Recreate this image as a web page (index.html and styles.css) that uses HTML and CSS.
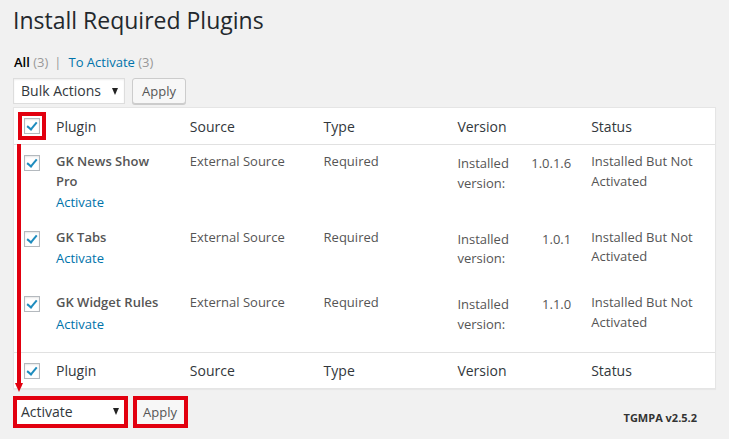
FILE: index.html
```html
<!DOCTYPE html>
<html lang="en">
<head>
    <meta charset="UTF-8">
    <meta name="viewport" content="width=device-width, initial-scale=1.0">
    <title>Install Required Plugins</title>
    <link rel="stylesheet" href="styles.css">
</head>
<body>

<div class="wrap">
    <h1>Install Required Plugins</h1>

    <ul class="subsubsub">
        <li><strong>All</strong> <span class="count">(3)</span></li>
        <li class="sep">|</li>
        <li><a href="#">To Activate</a> <span class="count">(3)</span></li>
    </ul>

    <div class="tablenav top">
        <div class="select">Bulk Actions<span class="arrow"></span></div>
        <button class="button">Apply</button>
    </div>

    <div class="table-box">
        <table class="plugins">
            <colgroup>
                <col class="col-cb">
                <col><col><col><col><col>
            </colgroup>
            <thead>
                <tr>
                    <th class="check-column"><span class="cb marked"></span></th>
                    <th>Plugin</th>
                    <th>Source</th>
                    <th>Type</th>
                    <th>Version</th>
                    <th>Status</th>
                </tr>
            </thead>
            <tbody>
                <tr>
                    <td class="check-column"><span class="cb"></span></td>
                    <td><strong>GK News Show Pro</strong><div class="row-actions"><a href="#">Activate</a></div></td>
                    <td>External Source</td>
                    <td>Required</td>
                    <td><p class="ver"><span class="lbl">Installed version:</span><span>1.0.1.6</span></p></td>
                    <td>Installed But Not Activated</td>
                </tr>
                <tr>
                    <td class="check-column"><span class="cb"></span></td>
                    <td><strong>GK Tabs</strong><div class="row-actions"><a href="#">Activate</a></div></td>
                    <td>External Source</td>
                    <td>Required</td>
                    <td><p class="ver"><span class="lbl">Installed version:</span><span>1.0.1</span></p></td>
                    <td>Installed But Not Activated</td>
                </tr>
                <tr>
                    <td class="check-column"><span class="cb"></span></td>
                    <td><strong>GK Widget Rules</strong><div class="row-actions"><a href="#">Activate</a></div></td>
                    <td>External Source</td>
                    <td>Required</td>
                    <td><p class="ver"><span class="lbl">Installed version:</span><span>1.1.0</span></p></td>
                    <td>Installed But Not Activated</td>
                </tr>
            </tbody>
            <tfoot>
                <tr>
                    <th class="check-column"><span class="cb"></span></th>
                    <th>Plugin</th>
                    <th>Source</th>
                    <th>Type</th>
                    <th>Version</th>
                    <th>Status</th>
                </tr>
            </tfoot>
        </table>
        <!-- annotation arrow -->
        <div class="mark-line"></div>
    </div>

    <div class="tablenav bottom">
        <div class="select marked-box">Activate<span class="arrow"></span></div>
        <button class="button marked-box">Apply</button>
        <p class="tgmpa"><strong>TGMPA v2.5.2</strong></p>
    </div>
</div>

</body>
</html>
```

FILE: styles.css
```css
body {
    margin: 0;
    background: #f1f1f1;
    font-family: "Open Sans", "Liberation Sans", sans-serif;
    font-size: 13px;
    color: #444;
}

.wrap {
    padding: 0 13px;
}

h1 {
    margin: 0;
    padding-top: 6px;
    font-size: 23px;
    font-weight: 400;
    line-height: 29px;
    color: #23282d;
}

a {
    color: #0073aa;
    text-decoration: none;
}

.subsubsub {
    list-style: none;
    margin: 14px 0 0;
    padding: 0 0 0 1px;
    display: flex;
    line-height: 26px;
    color: #666;
}

.subsubsub strong {
    color: #000;
    font-weight: 600;
}

.subsubsub .count {
    color: #999;
}

.subsubsub .sep {
    margin: 0 7px 0 6px;
    color: #999;
}

.tablenav {
    display: flex;
    align-items: flex-start;
    gap: 7px;
}

.tablenav.top {
    margin-top: 3px;
}

.tablenav.bottom {
    margin-top: 7px;
    gap: 5px;
}

.select {
    box-sizing: border-box;
    width: 112px;
    height: 26px;
    padding: 0 6px 0 7px;
    display: flex;
    align-items: center;
    justify-content: space-between;
    background: #fff;
    border: 1px solid #ddd;
    box-shadow: inset 0 1px 2px rgba(0, 0, 0, 0.07);
    font-size: 14px;
    line-height: 24px;
    color: #32373c;
}

.arrow {
    width: 0;
    height: 0;
    border-left: 3.5px solid transparent;
    border-right: 3.5px solid transparent;
    border-top: 7px solid #222;
}

.button {
    box-sizing: border-box;
    height: 26px;
    padding: 0 9px;
    background: #f7f7f7;
    border: 1px solid #ccc;
    border-radius: 3px;
    box-shadow: 0 1px 0 #ccc;
    font-family: inherit;
    font-size: 13px;
    line-height: 24px;
    color: #555;
}

/* red annotation boxes */
.select.marked-box {
    width: 115px;
    height: 32px;
    border: 4px solid #e2000f;
    padding: 0 5px 0 4px;
    box-shadow: none;
}

.button.marked-box {
    height: 32px;
    padding: 0 7px 0 6px;
    border: 4px solid #e2000f;
    border-radius: 0;
    box-shadow: none;
}

.tgmpa {
    margin: 14px 19px 0 auto;
    font-size: 11px;
    line-height: 16px;
    color: #333;
}

.tgmpa strong {
    font-weight: 700;
}

.table-box {
    position: relative;
    margin-top: 3px;
}

.plugins {
    width: 100%;
    table-layout: fixed;
    border-collapse: separate;
    border-spacing: 0;
    background: #fff;
    border: 1px solid #e5e5e5;
    box-shadow: 0 1px 1px rgba(0, 0, 0, 0.04);
}

.col-cb {
    width: 32px;
}

.plugins th {
    padding: 9px 10px 8px;
    text-align: left;
    font-size: 14px;
    font-weight: 400;
    line-height: 19px;
    color: #32373c;
}

.plugins thead th {
    border-bottom: 1px solid #e1e1e1;
}

.plugins tfoot th {
    padding-top: 8px;
    border-top: 1px solid #e1e1e1;
}

.plugins td {
    padding: 7px 10px 8px;
    vertical-align: top;
    line-height: 19.5px;
    color: #555;
}

.plugins td strong {
    font-weight: 600;
}

.plugins .check-column {
    padding: 10px 0 0 10px;
    vertical-align: top;
}

.row-actions {
    padding-top: 2px;
}

.ver {
    margin: 2px 0 9.5px;
    display: flex;
    justify-content: space-between;
}

.ver .lbl {
    flex: 1;
}

.cb {
    display: block;
    box-sizing: border-box;
    width: 16px;
    height: 16px;
    border: 1px solid #b4b9be;
    background: #fff;
    box-shadow: inset 0 1px 2px rgba(0, 0, 0, 0.1);
    position: relative;
}

.cb::after {
    content: "";
    position: absolute;
    left: 4px;
    top: 1px;
    width: 4px;
    height: 8px;
    border-right: 2.5px solid #1e8cbe;
    border-bottom: 2.5px solid #1e8cbe;
    transform: rotate(40deg);
}

.cb.marked {
    outline: 4px solid #e2000f;
    outline-offset: 2px;
}

.mark-line {
    position: absolute;
    left: 4px;
    top: 37px;
    width: 4px;
    height: 239px;
    background: #e2000f;
}

.mark-line::after {
    content: "";
    position: absolute;
    left: -2.5px;
    top: 100%;
    border-left: 4.5px solid transparent;
    border-right: 4.5px solid transparent;
    border-top: 9px solid #e2000f;
}
```
